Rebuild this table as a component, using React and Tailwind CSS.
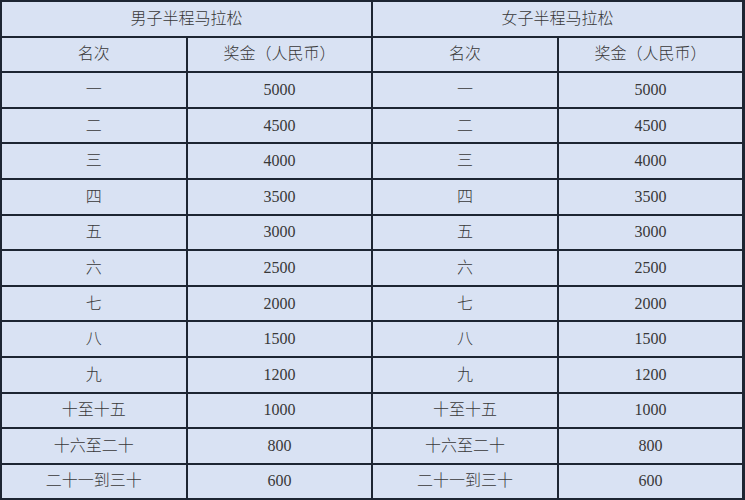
import React from 'react'

const rows = [
  ['一', '5000'],
  ['二', '4500'],
  ['三', '4000'],
  ['四', '3500'],
  ['五', '3000'],
  ['六', '2500'],
  ['七', '2000'],
  ['八', '1500'],
  ['九', '1200'],
  ['十至十五', '1000'],
  ['十六至二十', '800'],
  ['二十一到三十', '600'],
]

const cell = 'border-2 border-[#1d2532] h-[35.6px] p-0 text-center align-middle font-light'

const App = () => {
  return (
    <div
      className="w-[745px] h-[500px] bg-[#d9e2f3] text-[16px] text-[#383838] overflow-hidden"
      style={{ fontFamily: '"Liberation Serif", "Noto Sans CJK SC", serif' }}
    >
      <table className="w-full table-fixed border-collapse border-l-2 border-t-2 border-r-[3px] border-b-[3px] border-[#1d2532]">
        <thead>
          <tr>
            <th colSpan={2} className={cell}>男子半程马拉松</th>
            <th colSpan={2} className={cell}>女子半程马拉松</th>
          </tr>
          <tr>
            <th className={cell}>名次</th>
            <th className={cell}>奖金（人民币）</th>
            <th className={cell}>名次</th>
            <th className={cell}>奖金（人民币）</th>
          </tr>
        </thead>
        <tbody>
          {rows.map(([rank, prize]) => (
            <tr key={rank}>
              <td className={cell}>{rank}</td>
              <td className={cell}>{prize}</td>
              <td className={cell}>{rank}</td>
              <td className={cell}>{prize}</td>
            </tr>
          ))}
        </tbody>
      </table>
    </div>
  )
}

export default App
